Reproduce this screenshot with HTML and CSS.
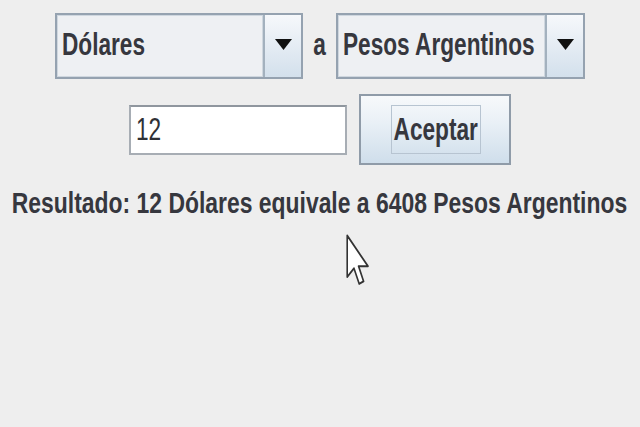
FILE: index.html
```html
<!DOCTYPE html>
<html lang="es">
<head>
<meta charset="utf-8">
<title>Conversor</title>
<link rel="stylesheet" href="styles.css">
</head>
<body>
<div class="app">
  <div class="row row-combos">
    <div class="combo combo-from">
      <span class="combo-value"><span class="narrow narrow-left">Dólares</span></span>
      <span class="combo-arrow"><svg width="17" height="11" viewBox="0 0 17 11"><polygon points="0,0 17,0 8.5,11" fill="#111"/></svg></span>
    </div>
    <span class="sep"><span class="narrow">a</span></span>
    <div class="combo combo-to">
      <span class="combo-value"><span class="narrow narrow-left">Pesos Argentinos</span></span>
      <span class="combo-arrow"><svg width="17" height="11" viewBox="0 0 17 11"><polygon points="0,0 17,0 8.5,11" fill="#111"/></svg></span>
    </div>
  </div>
  <div class="row row-input">
    <div class="field"><span class="narrow narrow-left">12</span></div>
    <div class="button"><span class="button-focus"><span class="narrow">Aceptar</span></span></div>
  </div>
  <div class="result"><span class="narrow result-text">Resultado: 12 Dólares equivale a 6408 Pesos Argentinos</span></div>
  <svg class="cursor" width="24" height="52" viewBox="0 0 12 20" preserveAspectRatio="none"><path d="M0.6,0.6 L0.6,16.5 L4,13.2 L6.6,19.2 L8.8,18.2 L6.3,12.4 L11,12.4 Z" fill="#fff" stroke="#333" stroke-width="0.8" stroke-linejoin="round"/></svg>
</div>
</body>
</html>
```
FILE: styles.css
```css
html, body {
  margin: 0;
  padding: 0;
  background: #eeeeee;
  overflow: hidden;
}
.app {
  position: relative;
  width: 640px;
  height: 427px;
  padding-top: 13px;
  box-sizing: border-box;
  display: flex;
  flex-direction: column;
  align-items: center;
  overflow: hidden;
  font-family: "Liberation Sans", Arial, sans-serif;
  font-weight: bold;
  color: #36373e;
}
.narrow {
  display: inline-block;
  white-space: nowrap;
  transform: scaleX(0.73);
  transform-origin: center;
}
.narrow-left {
  transform-origin: left center;
}
.row {
  display: flex;
  align-items: center;
}
.row-combos {
  height: 66px;
}
.combo {
  height: 66px;
  box-sizing: border-box;
  border: 2px solid #95a2b0;
  background: #eef0f3;
  display: flex;
  align-items: stretch;
}
.combo-from { width: 248px; }
.combo-to { width: 249px; }
.combo-value {
  flex: 1;
  min-width: 0;
  overflow: hidden;
  display: flex;
  align-items: center;
  padding: 0 0 3px 4px;
  font-size: 31px;
  border: 1px solid #cfd7df;
}
.combo-arrow {
  width: 36px;
  flex: none;
  border-left: 2px solid #a3b1be;
  background: linear-gradient(#f6f8fb, #d3e0ec);
  display: flex;
  align-items: center;
  justify-content: center;
}
.combo-arrow svg {
  margin-bottom: 3px;
}
.sep {
  width: 33px;
  text-align: center;
  font-size: 31px;
  padding-bottom: 3px;
}
.row-input {
  margin-top: 15px;
  height: 71px;
  gap: 12px;
}
.field {
  width: 218px;
  height: 50px;
  box-sizing: border-box;
  overflow: hidden;
  background: #fff;
  border: 2px solid #a7adb4;
  border-top-color: #8f969e;
  display: flex;
  align-items: center;
  padding-left: 5px;
  font-size: 31px;
  font-weight: normal;
  color: #2f3036;
}
.button {
  width: 152px;
  height: 71px;
  box-sizing: border-box;
  border: 2px solid #8f9ba8;
  background: linear-gradient(#f7f9fb, #e9f0f6 40%, #cfdeeb);
  display: flex;
  align-items: center;
  justify-content: center;
}
.button-focus {
  width: 90px;
  height: 49px;
  margin-left: 2px;
  box-sizing: border-box;
  border: 1px solid #b7c4d1;
  display: flex;
  align-items: center;
  justify-content: center;
  font-size: 31px;
}
.result {
  margin-top: 22px;
  width: 100%;
  display: flex;
  justify-content: center;
  font-size: 29px;
  line-height: 32px;
  white-space: nowrap;
}
.result-text {
  transform: scaleX(0.79);
  margin: 0 -82px;
}
.cursor {
  position: absolute;
  left: 346px;
  top: 234px;
}
```
